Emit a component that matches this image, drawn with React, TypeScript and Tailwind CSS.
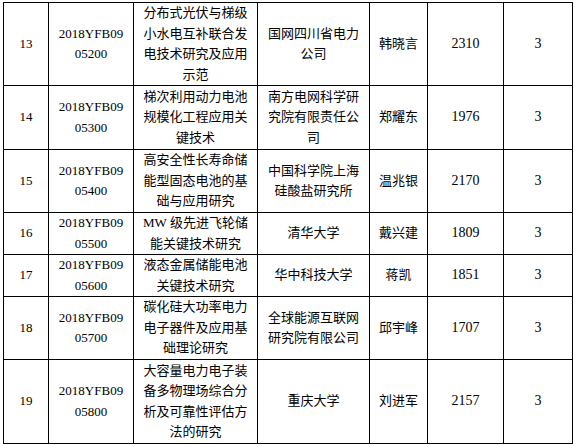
import { FC } from 'react'

// Uma linha da tabela de projetos. Textos longos já vêm quebrados em linhas,
// igual ao documento original.
type Linha = {
  n: number
  codigo: string[]
  titulo: string[]
  unidade: string[]
  responsavel: string
  valor: string
  prazo: string
  altura: string
}

const linhas: Linha[] = [
  {
    n: 13,
    codigo: ['2018YFB09', '05200'],
    titulo: ['分布式光伏与梯级', '小水电互补联合发', '电技术研究及应用', '示范'],
    unidade: ['国网四川省电力', '公司'],
    responsavel: '韩晓言',
    valor: '2310',
    prazo: '3',
    altura: 'h-[82px]',
  },
  {
    n: 14,
    codigo: ['2018YFB09', '05300'],
    titulo: ['梯次利用动力电池', '规模化工程应用关', '键技术'],
    unidade: ['南方电网科学研', '究院有限责任公', '司'],
    responsavel: '郑耀东',
    valor: '1976',
    prazo: '3',
    altura: 'h-[64px]',
  },
  {
    n: 15,
    codigo: ['2018YFB09', '05400'],
    titulo: ['高安全性长寿命储', '能型固态电池的基', '础与应用研究'],
    unidade: ['中国科学院上海', '硅酸盐研究所'],
    responsavel: '温兆银',
    valor: '2170',
    prazo: '3',
    altura: 'h-[63px]',
  },
  {
    n: 16,
    codigo: ['2018YFB09', '05500'],
    titulo: ['MW 级先进飞轮储', '能关键技术研究'],
    unidade: ['清华大学'],
    responsavel: '戴兴建',
    valor: '1809',
    prazo: '3',
    altura: 'h-[42px]',
  },
  {
    n: 17,
    codigo: ['2018YFB09', '05600'],
    titulo: ['液态金属储能电池', '关键技术研究'],
    unidade: ['华中科技大学'],
    responsavel: '蒋凯',
    valor: '1851',
    prazo: '3',
    altura: 'h-[42px]',
  },
  {
    n: 18,
    codigo: ['2018YFB09', '05700'],
    titulo: ['碳化硅大功率电力', '电子器件及应用基', '础理论研究'],
    unidade: ['全球能源互联网', '研究院有限公司'],
    responsavel: '邱宇峰',
    valor: '1707',
    prazo: '3',
    altura: 'h-[63px]',
  },
  {
    n: 19,
    codigo: ['2018YFB09', '05800'],
    titulo: ['大容量电力电子装', '备多物理场综合分', '析及可靠性评估方', '法的研究'],
    unidade: ['重庆大学'],
    responsavel: '刘进军',
    valor: '2157',
    prazo: '3',
    altura: 'h-[84px]',
  },
]

const Quebrado: FC<{ partes: string[] }> = ({ partes }) => (
  <>
    {partes.map((p, i) => (
      <span key={i} className="block">
        {p}
      </span>
    ))}
  </>
)

const celula = 'border border-black text-center align-middle p-0'

export default function App() {
  return (
    <div
      className="w-[575px] h-[445px] bg-white pt-[2px] pl-[3px] text-black text-[13px] leading-[20.5px]"
      style={{ fontFamily: '"Liberation Serif", "Noto Sans CJK SC", serif' }}
    >
      <table className="table-fixed border-collapse w-[569px]">
        <colgroup>
          <col className="w-[45px]" />
          <col className="w-[85px]" />
          <col className="w-[124px]" />
          <col className="w-[112px]" />
          <col className="w-[58px]" />
          <col className="w-[76px]" />
          <col className="w-[69px]" />
        </colgroup>
        <tbody>
          {linhas.map((l) => (
            <tr key={l.n} className={l.altura}>
              <td className={celula}>{l.n}</td>
              <td className={celula}>
                <Quebrado partes={l.codigo} />
              </td>
              <td className={celula}>
                <Quebrado partes={l.titulo} />
              </td>
              <td className={celula}>
                <Quebrado partes={l.unidade} />
              </td>
              <td className={celula}>{l.responsavel}</td>
              <td className={`${celula} text-[14px]`}>{l.valor}</td>
              <td className={`${celula} text-[14px]`}>{l.prazo}</td>
            </tr>
          ))}
        </tbody>
      </table>
    </div>
  )
}
